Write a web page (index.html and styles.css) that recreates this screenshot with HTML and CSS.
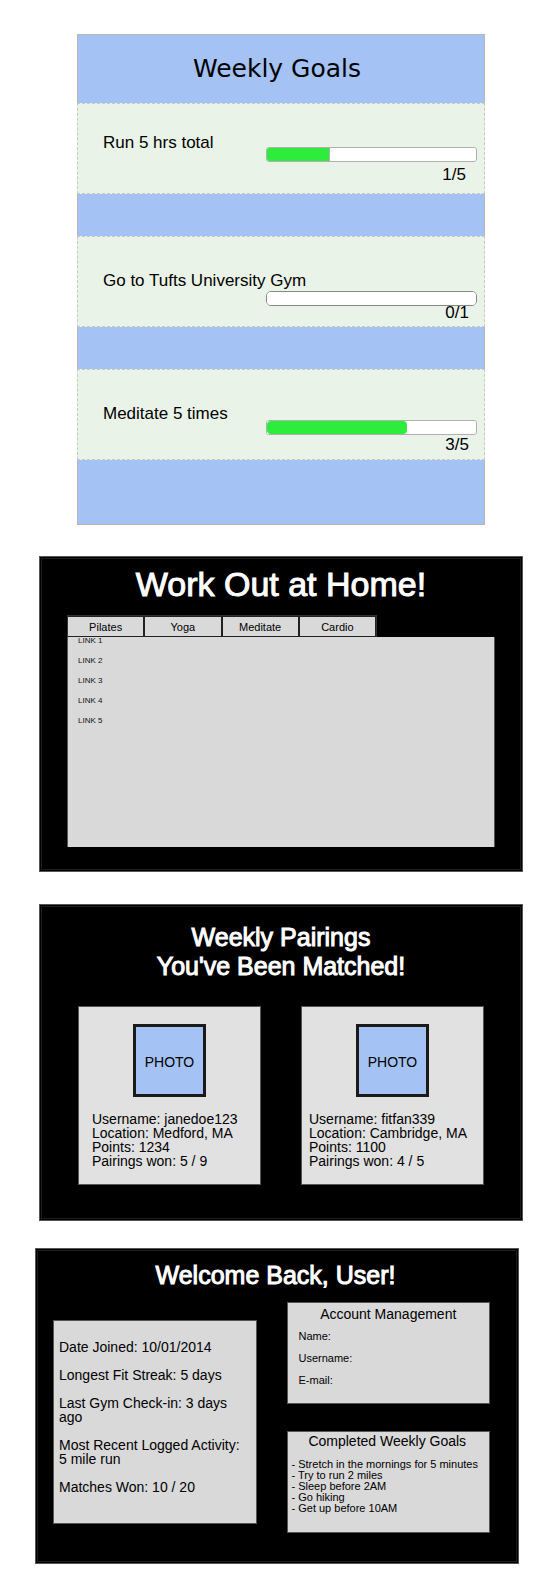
FILE: index.html
```html
<!DOCTYPE html>
<html lang="en">
<head>
<meta charset="utf-8">
<title>Fitness Dashboard</title>
<link rel="stylesheet" href="styles.css">
</head>
<body>
<main class="page">
  <section class="goals">
    <h1 class="goals-title">Weekly Goals</h1>
    <div class="goal goal-run">
      <label class="goal-label" for="goal-run">Run 5 hrs total</label>
      <div class="meter">
        <progress class="bar bar-square" id="goal-run" value="30" max="100"></progress>
        <span class="count">1/5</span>
      </div>
    </div>
    <div class="goal goal-gym">
      <label class="goal-label" for="goal-gym">Go to Tufts University Gym</label>
      <div class="meter">
        <progress class="bar bar-empty" id="goal-gym" value="0" max="100"></progress>
        <span class="count">0/1</span>
      </div>
    </div>
    <div class="goal goal-meditate">
      <label class="goal-label" for="goal-meditate">Meditate 5 times</label>
      <div class="meter">
        <progress class="bar" id="goal-meditate" value="67" max="100"></progress>
        <span class="count">3/5</span>
      </div>
    </div>
  </section>

  <section class="panel workout">
    <h2 class="panel-title title-large">Work Out at Home!</h2>
    <div class="tabs" role="tablist">
      <button class="tab" role="tab" type="button">Pilates</button>
      <button class="tab" role="tab" type="button">Yoga</button>
      <button class="tab" role="tab" type="button">Meditate</button>
      <button class="tab" role="tab" type="button">Cardio</button>
    </div>
    <div class="links" role="tabpanel">
      <a href="#">LINK 1</a>
      <a href="#">LINK 2</a>
      <a href="#">LINK 3</a>
      <a href="#">LINK 4</a>
      <a href="#">LINK 5</a>
    </div>
  </section>

  <section class="panel pairings">
    <h2 class="panel-title">Weekly Pairings<br>You've Been Matched!</h2>
    <div class="matches">
      <article class="match">
        <div class="photo">PHOTO</div>
        <ul class="facts">
          <li>Username: janedoe123</li>
          <li>Location: Medford, MA</li>
          <li>Points: 1234</li>
          <li>Pairings won: 5 / 9</li>
        </ul>
      </article>
      <article class="match match-wide">
        <div class="photo">PHOTO</div>
        <ul class="facts">
          <li>Username: fitfan339</li>
          <li>Location: Cambridge, MA</li>
          <li>Points: 1100</li>
          <li>Pairings won: 4 / 5</li>
        </ul>
      </article>
    </div>
  </section>

  <section class="panel welcome">
    <h2 class="panel-title">Welcome Back, User!</h2>
    <div class="profile">
      <div class="card stats">
        <p>Date Joined: 10/01/2014</p>
        <p>Longest Fit Streak: 5 days</p>
        <p>Last Gym Check-in: 3 days ago</p>
        <p>Most Recent Logged Activity: 5 mile run</p>
        <p>Matches Won: 10 / 20</p>
      </div>
      <div class="side">
        <div class="card account">
          <h3 class="card-title">Account Management</h3>
          <p>Name:</p>
          <p>Username:</p>
          <p>E-mail:</p>
        </div>
        <div class="card completed">
          <h3 class="card-title">Completed Weekly Goals</h3>
          <ul class="done">
            <li>- Stretch in the mornings for 5 minutes</li>
            <li>- Try to run 2 miles</li>
            <li>- Sleep before 2AM</li>
            <li>- Go hiking</li>
            <li>- Get up before 10AM</li>
          </ul>
        </div>
      </div>
    </div>
  </section>
</main>
</body>
</html>
```

FILE: styles.css
```css
* {
  box-sizing: border-box;
}

body {
  margin: 0;
  background: #fff;
  color: #000;
  font-family: "Liberation Sans", Arial, sans-serif;
  font-size: 14px;
  line-height: 14px;
}

h1, h2, h3, p, ul {
  margin: 0;
  padding: 0;
  font-weight: normal;
}

ul {
  list-style: none;
}

.page {
  padding: 34px 13px 13px 35px;
}

/* Weekly goals */

.goals {
  display: flex;
  flex-direction: column;
  gap: 42px;
  margin: 0 38px 31px 42px;
  padding-bottom: 64px;
  border: 1px solid #b7b7b7;
  background: #a4c2f4;
}

.goals-title {
  margin-bottom: -42px;
  padding: 18px 8px 18px 0;
  font-family: "DejaVu Sans", Verdana, sans-serif;
  font-size: 25px;
  line-height: 32px;
  text-align: center;
}

.goal {
  display: flex;
  margin: 0 -1px;
  min-height: 91px;
  padding: 0 7px 0 25px;
  border: 1px dashed #c3cbc3;
  background: #e9f3e7;
  font-size: 17px;
  line-height: 20px;
}

.goal-label {
  flex: 1 1 0;
  min-width: 0;
  padding-top: 34px;
  white-space: nowrap;
}

.meter {
  display: flex;
  flex-direction: column;
  width: 211px;
  padding-top: 50px;
}

.count {
  padding-right: 8px;
  text-align: right;
}

.goal-run .goal-label {
  padding-top: 29px;
}

.goal-run .meter {
  gap: 3px;
  padding-top: 43px;
}

.goal-run .count {
  padding-right: 11px;
}

.goal-gym .meter {
  padding-top: 54px;
}

.goal-gym .count {
  margin-top: -3px;
}

.bar {
  appearance: none;
  -webkit-appearance: none;
  display: block;
  width: 100%;
  height: 15px;
  overflow: hidden;
  border: 1px solid #b0b0b0;
  border-radius: 3px;
  background: #fff;
}

.bar::-webkit-progress-bar {
  background: #fff;
}

.bar::-webkit-progress-value {
  border-radius: 4px;
  background: #2eec3c;
}

.bar-square::-webkit-progress-value {
  border-right: 1px solid #b0b0b0;
  border-radius: 0;
}

.bar-empty {
  border-color: #888;
  border-radius: 5px;
}

/* Black panels */

.panel {
  min-height: 315px;
  margin: 0 0 32px 4px;
  border: 1px solid #555;
  background: #000;
  box-shadow: inset 0 0 0 1px #000, inset 0 0 0 2px #1c1c1c;
}

.panel-title {
  color: #fff;
  font-size: 25px;
  line-height: 29px;
  text-align: center;
  -webkit-text-stroke: 1px #fff;
}

.title-large {
  font-size: 34px;
  line-height: 38px;
}

/* Work out at home */

.workout {
  padding: 8px 27px 24px;
}

.tabs {
  display: flex;
  width: 310px;
  margin-top: 12px;
  border: 1px solid #333;
  border-bottom: 0;
}

.tab {
  flex: 1 1 0;
  height: 21px;
  margin: 0;
  padding: 0;
  border: solid #222;
  border-width: 1px 2px 1px 0;
  background: #d9d9d9;
  color: #000;
  font: inherit;
  font-size: 11px;
}

.tab:last-child {
  border-right-width: 1px;
}

.links {
  display: flex;
  flex-direction: column;
  align-items: flex-start;
  gap: 12px;
  min-height: 210px;
  padding: 0 10px;
  border: solid #555;
  border-width: 0 1px;
  background: #d9d9d9;
}

.links a {
  color: #111;
  font-size: 8px;
  line-height: 8px;
  text-decoration: none;
}

/* Weekly pairings */

.pairings {
  margin-bottom: 27px;
  padding: 18px 38px 35px;
}

.matches {
  display: grid;
  grid-template-columns: 1fr 1fr;
  gap: 40px;
  margin-top: 25px;
}

.match {
  display: flex;
  flex-direction: column;
  gap: 15px;
  min-height: 177px;
  padding: 17px 0 16px 13px;
  border: 1px solid #555;
  background: #e1e1e1;
}

.match-wide {
  padding-left: 7px;
}

.photo {
  display: flex;
  align-items: center;
  justify-content: center;
  width: 73px;
  height: 73px;
  margin-left: 41px;
  padding-top: 2px;
  border: 3px solid #1a1a1a;
  background: #a4c2f4;
}

.match-wide .photo {
  margin-left: 47px;
}

/* Welcome back */

.welcome {
  margin: 0 4px 0 0;
  padding: 12px 28px 30px 17px;
}

.welcome .panel-title {
  padding-left: 8px;
}

.profile {
  display: grid;
  grid-template-columns: 1fr 1fr;
  gap: 30px;
  align-items: start;
  margin-top: 12px;
}

.card {
  border: 1px solid #555;
  background: #d9d9d9;
}

.card-title {
  font-size: 14px;
  line-height: 14px;
  text-align: center;
}

.stats {
  display: flex;
  flex-direction: column;
  gap: 14px;
  min-height: 204px;
  margin-top: 18px;
  padding: 19px 8px 18px 5px;
}

.side {
  display: flex;
  flex-direction: column;
  gap: 27px;
  font-size: 11px;
  line-height: 11px;
}

.side .card {
  display: flex;
  flex-direction: column;
  gap: 11px;
  min-height: 102px;
}

.account {
  padding: 4px 2px 4px 11px;
}

.account .card-title {
  padding-right: 9px;
  margin-bottom: -1px;
}

.completed {
  padding: 2px 2px 4px 4px;
}

.completed .card-title {
  padding-right: 4px;
}
```
